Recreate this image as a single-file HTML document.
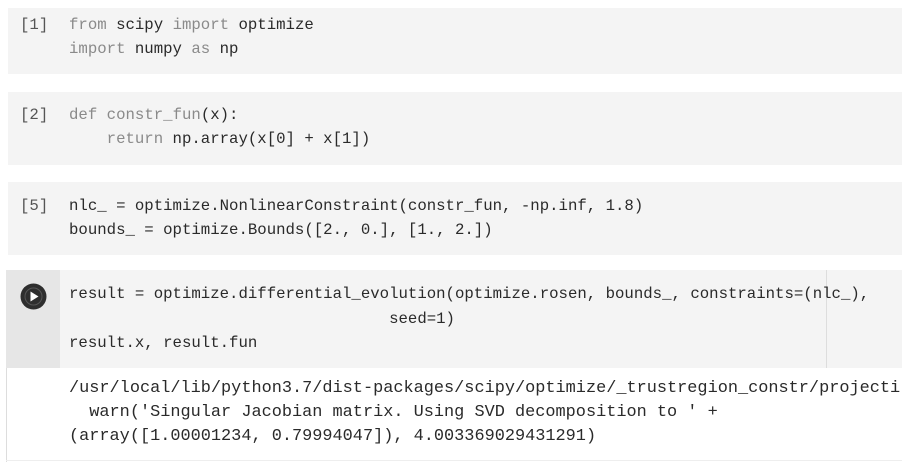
<!DOCTYPE html>
<html><head><style>
body{margin:0;width:902px;height:463px;background:#fff;position:relative;overflow:hidden;font-family:"Liberation Mono",monospace;font-size:15.7px;color:#2a2a2a}
.c{position:absolute;left:8px;right:0;background:#f4f4f4}
.t{position:absolute;white-space:pre;line-height:24px}
.k{color:#8a8a8a}
.n{position:absolute;left:20px;color:#555;line-height:24px}
</style></head><body>
<div class="c" style="top:8px;height:66px"></div>
<div class="n" style="top:13px">[1]</div>
<div class="t" style="left:69px;top:13px"><span class="k">from</span> scipy <span class="k">import</span> optimize
<span class="k">import</span> numpy <span class="k">as</span> np</div>

<div class="c" style="top:92px;height:73px"></div>
<div class="n" style="top:103px">[2]</div>
<div class="t" style="left:69px;top:103px"><span class="k">def</span> <span class="k">constr_fun</span>(x):
    <span class="k">return</span> np.array(x[0] + x[1])</div>

<div class="c" style="top:182px;height:73px"></div>
<div class="n" style="top:194px">[5]</div>
<div class="t" style="left:69px;top:194px">nlc_ = optimize.NonlinearConstraint(constr_fun, -np.inf, 1.8)
bounds_ = optimize.Bounds([2., 0.], [1., 2.])</div>

<div style="position:absolute;left:6px;top:270px;width:54px;height:98px;background:#e6e6e6"></div>
<div style="position:absolute;left:60px;top:270px;right:0;height:98px;background:#f4f4f4"></div>
<div style="position:absolute;left:826px;top:270px;width:1px;height:98px;background:#ddd"></div>
<div style="position:absolute;left:6px;top:368px;width:1px;height:94px;background:#ddd"></div>
<div style="position:absolute;left:6px;top:460px;right:0;height:1px;background:#eee"></div>
<svg style="position:absolute;left:20px;top:283px" width="27" height="27" viewBox="0 0 27 27"><circle cx="13.5" cy="13.5" r="13" fill="#2e2e2e"/><circle cx="13.5" cy="13.5" r="8.5" fill="none" stroke="#555" stroke-width="1"/><path d="M10.5 8.5 L18.5 13.5 L10.5 18.5Z" fill="#fff"/></svg>
<div class="t" style="left:69px;top:282px;line-height:24.5px">result = optimize.differential_evolution(optimize.rosen, bounds_, constraints=(nlc_),
                                  seed=1)
result.x, result.fun</div>
<div class="t" style="left:69px;top:377px;font-size:16.9px">/usr/local/lib/python3.7/dist-packages/scipy/optimize/_trustregion_constr/projecti
  warn('Singular Jacobian matrix. Using SVD decomposition to ' +
(array([1.00001234, 0.79994047]), 4.003369029431291)</div>
</body></html>
